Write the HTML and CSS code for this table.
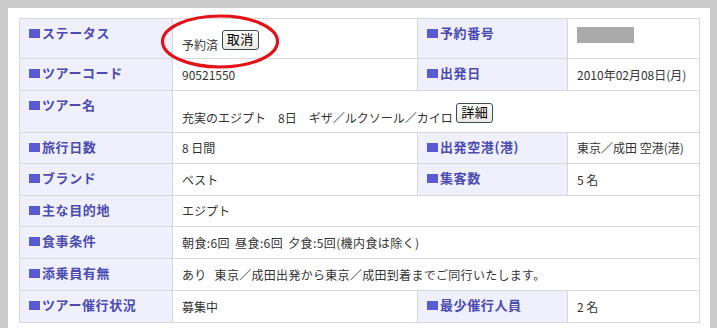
FILE: index.html
```html
<!DOCTYPE html>
<html lang="ja">
<head>
<meta charset="utf-8">
<title>予約詳細</title>
<link rel="stylesheet" href="styles.css">
</head>
<body>
<div class="panel">
  <table class="info">
    <colgroup>
      <col class="c1"><col class="c2"><col class="c3"><col class="c4">
    </colgroup>
    <tr class="r1">
      <th><span class="sq"></span>ステータス</th>
      <td>予約済 <span class="btn">取消</span></td>
      <th><span class="sq"></span>予約番号</th>
      <td class="top"><span class="masked"></span></td>
    </tr>
    <tr class="r2">
      <th><span class="sq"></span>ツアーコード</th>
      <td>90521550</td>
      <th><span class="sq"></span>出発日</th>
      <td>2010年02月08日(月)</td>
    </tr>
    <tr class="r3">
      <th><span class="sq"></span>ツアー名</th>
      <td colspan="3">充実のエジプト　8日　ギザ／ルクソール／カイロ <span class="btn">詳細</span></td>
    </tr>
    <tr class="r4">
      <th><span class="sq"></span>旅行日数</th>
      <td>8 日間</td>
      <th><span class="sq"></span>出発空港(港)</th>
      <td>東京／成田 空港(港)</td>
    </tr>
    <tr class="r5">
      <th><span class="sq"></span>ブランド</th>
      <td>ベスト</td>
      <th><span class="sq"></span>集客数</th>
      <td>5 名</td>
    </tr>
    <tr class="r6">
      <th><span class="sq"></span>主な目的地</th>
      <td colspan="3">エジプト</td>
    </tr>
    <tr class="r5">
      <th><span class="sq"></span>食事条件</th>
      <td colspan="3" class="meal">朝食:6回 昼食:6回 夕食:5回(機内食は除く)</td>
    </tr>
    <tr class="r5">
      <th><span class="sq"></span>添乗員有無</th>
      <td colspan="3" class="guide">あり 東京／成田出発から東京／成田到着までご同行いたします。</td>
    </tr>
    <tr class="r5">
      <th><span class="sq"></span>ツアー催行状況</th>
      <td>募集中</td>
      <th><span class="sq"></span>最少催行人員</th>
      <td>2 名</td>
    </tr>
  </table>
  <svg class="circle" width="124" height="60" viewBox="0 0 124 60" aria-hidden="true">
    <ellipse cx="61" cy="29.5" rx="57.5" ry="25.5" fill="none" stroke="#e41218" stroke-width="3.2"/>
  </svg>
</div>
</body>
</html>
```
FILE: styles.css
```css
html, body {
  margin: 0;
  padding: 0;
}
body {
  background: #cbcbcb;
  font-family: "Noto Sans CJK JP", "Noto Sans", sans-serif;
  padding: 8px 0 0 8px;
}
.panel {
  position: relative;
  width: 681px;
  background: #ffffff;
  padding: 10px 10px 20px 11px;
}
.info {
  width: 681px;
  table-layout: fixed;
  border-collapse: separate;
  border-spacing: 0;
  border-top: 1px solid #d8d8d8;
  border-left: 1px solid #d8d8d8;
}
.c1 { width: 153px; }
.c2 { width: 245px; }
.c3 { width: 150px; }
.c4 { width: 132px; }
.info th, .info td {
  border-right: 1px solid #d8d8d8;
  border-bottom: 1px solid #d8d8d8;
  padding: 0 0 0 9px;
  text-align: left;
}
.info th {
  background: #eff0fc;
  color: #4b4bb2;
  font-size: 13px;
  font-weight: bold;
  letter-spacing: 0.6px;
  vertical-align: top;
  padding-top: 5px;
  line-height: 18px;
  white-space: nowrap;
}
.info td {
  color: #333333;
  font-size: 12px;
  line-height: 16px;
  vertical-align: middle;
  white-space: nowrap;
}
.info td.top {
  vertical-align: top;
  padding-top: 8px;
}
.info td.meal {
  letter-spacing: 0.4px;
  word-spacing: 2px;
}
.info td.guide {
  letter-spacing: 0.3px;
  word-spacing: 5px;
}
.r1 th, .r1 td { height: 40px; box-sizing: border-box; }
.r2 th, .r2 td { height: 32px; box-sizing: border-box; }
.r3 th, .r3 td { height: 42px; box-sizing: border-box; }
.r4 th, .r4 td { height: 31px; box-sizing: border-box; }
.r5 th, .r5 td { height: 32px; box-sizing: border-box; }
.r6 th, .r6 td { height: 31px; box-sizing: border-box; }
.r1 td { padding-top: 5px; }
.r3 td { padding-top: 5px; }
.sq {
  display: inline-block;
  width: 11px;
  height: 9px;
  background: #5a5ad2;
  margin-right: 2px;
  vertical-align: 0;
}
.btn {
  display: inline-block;
  overflow: hidden;
  box-sizing: border-box;
  height: 20px;
  padding: 0 4px;
  border: 1px solid #3c4a58;
  border-radius: 3px;
  background: linear-gradient(#fdfdfb, #e9e8e1);
  color: #000000;
  font-size: 13px;
  line-height: 16px;
  letter-spacing: 0.5px;
  margin-left: 1px;
}
.masked {
  display: inline-block;
  width: 57px;
  height: 16px;
  background: #aaaaaa;
}
.circle {
  position: absolute;
  left: 151px;
  top: 4px;
}
```
